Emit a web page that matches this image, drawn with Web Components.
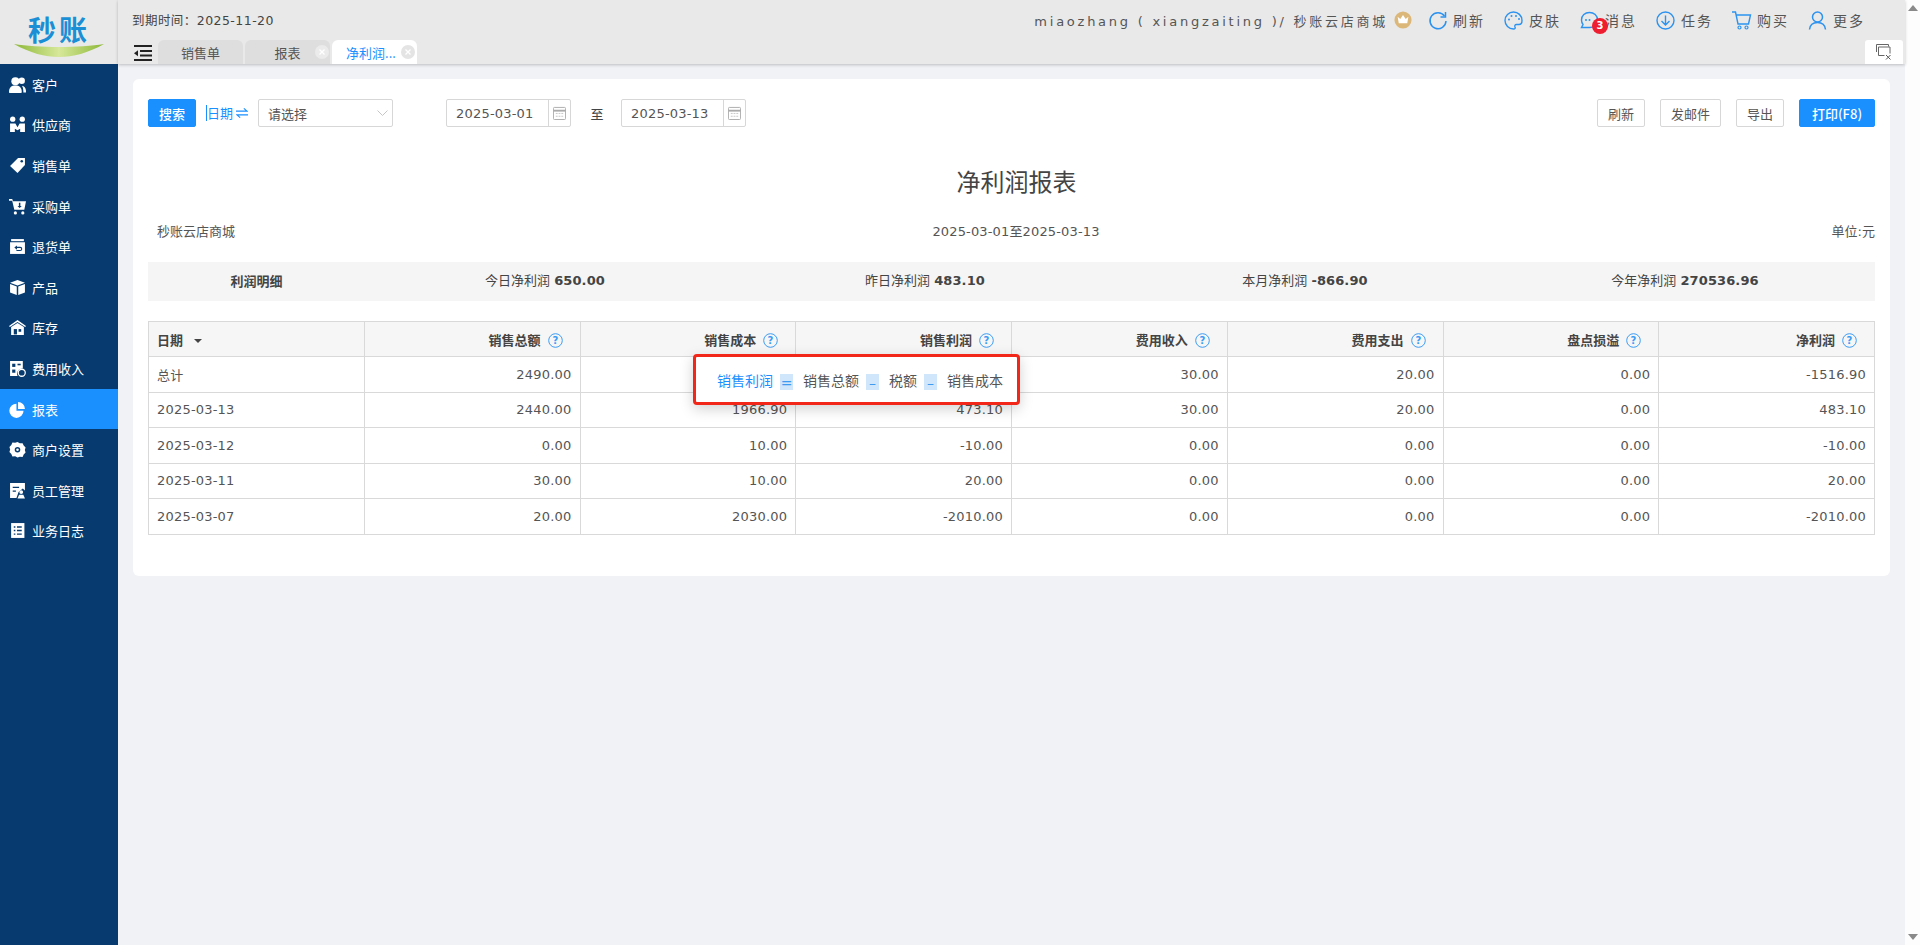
<!DOCTYPE html>
<html lang="zh-CN"><head><meta charset="utf-8"><title>净利润报表</title>
<style>
html,body{margin:0;height:100%;overflow:hidden;background:#f0f2f6;}
body{font:13px "DejaVu Sans","Noto Sans CJK SC",sans-serif;color:#555;}
</style></head><body>
<app-shell></app-shell>
<script>
const FONT='"DejaVu Sans","Noto Sans CJK SC",sans-serif';
const BLUE='#1a90ff';
function def(name,css,html,init){
  customElements.define(name,class extends HTMLElement{
    constructor(){super();const r=this.attachShadow({mode:'open'});
      r.innerHTML='<style>'+css+'</style>'+(typeof html==='function'?html(this):html);}
    connectedCallback(){if(typeof html==='function'){this.shadowRoot.innerHTML='<style>'+css+'</style>'+html(this);} if(init)init(this);}
  });
}
const NAV={
 客户:'<circle cx="6" cy="5" r="3.800"/><path d="M0 15c0-4.200 2.300-6 6-6s6 1.800 6 6c0 .6-.4 1-1 1H1c-.6 0-1-.4-1-1z"/><circle cx="12" cy="4.500" r="3"/><path d="M13.500 15.500H16c.3-3.800-1.300-6-3.800-6.400 1 1.500 1.400 3.700 1.300 6.400z"/>',
 供应商:'<circle cx="3.500" cy="3" r="2.500"/><circle cx="12.500" cy="3" r="2.500"/><path d="M1 7h5l2 3.500L10 7h5v8h-4.500v-3L8 13.500 5.500 12v3H1z"/>',
 销售单:'<path d="M8.500 1H15v6.500L8 15 1 8.500z"/><circle cx="12" cy="4" r="1.200" fill="#073b6f"/>',
 采购单:'<path d="M0 1h3l.8 2H16l-1.600 8H5L3 2.500H0z"/><circle cx="6" cy="14" r="1.500"/><circle cx="13" cy="14" r="1.500"/><path d="M9.300 4.500v3H8l2 2 2-2h-1.300v-3z" fill="#073b6f"/>',
 退货单:'<path d="M2 1h12v2H2z"/><path d="M1 4h14v11H1z"/><path d="M5 9l2.500-2v1.300h3a2 2 0 0 1 0 4H7v-1h3.500a1 1 0 0 0 0-2h-3V11z" fill="#073b6f"/>',
 产品:'<path d="M8 1l7 2.500-7 2.500-7-2.500z"/><path d="M1 4.800l6.300 2.300V15L1 12.700z"/><path d="M15 4.800L8.700 7.100V15l6.300-2.300z"/>',
 库存:'<path d="M8 1l8 5.500-.8 1L8 2.800.8 7.500 0 6.500z"/><path d="M2 7.500L8 3.800l6 3.700V15H2z"/><rect x="4.500" y="9.500" width="3" height="5" fill="#073b6f"/><rect x="9" y="9.500" width="2.500" height="2.500" fill="#073b6f"/>',
 费用收入:'<path d="M1 1h12v7a5 5 0 0 0-5 7H1z"/><rect x="3" y="3.500" width="3" height="3" fill="#073b6f"/><rect x="8" y="3.500" width="3" height="1.500" fill="#073b6f"/><rect x="3" y="9" width="3" height="3" fill="#073b6f"/><circle cx="12" cy="12" r="3.300" fill="none" stroke="#fff" stroke-width="1.200"/>',
 报表:'<path d="M7 2.500a6.700 6.700 0 1 0 6.700 6.700H7z"/><path d="M8.500 1a6.500 6.500 0 0 1 6.500 6.500H8.500z"/>',
 商户设置:'<path d="M8 1l2.200 1.100 2.600-.1 1 2.300 1.800 1.800-.7 2.400.7 2.400-1.800 1.800-1 2.300-2.600-.1L8 15.500l-2.200-1.100-2.600.1-1-2.300L.4 10.400 1.100 8 .4 5.600l1.800-1.800 1-2.300 2.600.1z"/><circle cx="8" cy="8.200" r="2.600" fill="#073b6f"/><circle cx="8" cy="8.200" r="1.200"/>',
 员工管理:'<path d="M1 1h14v7l-2-2-4 3.500L7 15H1z"/><path d="M3.500 4.500h6v1.200h-6zM3.500 8h3v1.200h-3z" fill="#073b6f"/><circle cx="11.500" cy="9.500" r="1.800"/><path d="M8 15.500l1.500-3.500h4l1.500 3.500z"/>',
 业务日志:'<path d="M2 1h12.500v14H2z"/><path d="M4.500 4h1.500v1.300H4.500zM7.500 4h4.500v1.300H7.500zM4.500 7.400h1.500v1.300H4.500zM7.500 7.400h4.500v1.300H7.500zM4.500 10.800h1.500v1.300H4.500zM7.500 10.800h4.500v1.300H7.500z" fill="#073b6f"/>'
};

def('app-logo',`:host{display:block;width:118px;height:64px;position:relative;background:#e9e9e9;font-family:"Noto Sans CJK SC",sans-serif}
.t{display:block;text-align:center;font-size:28px;font-weight:700;line-height:32px;padding-top:13px;letter-spacing:3px;color:#1a8fd6;}
svg{position:absolute;left:13px;top:43px}`,
`<span class="t">秒账</span><svg width="92" height="16" viewBox="0 0 92 16"><defs><linearGradient id="g" x1="0" x2="1" y1="0" y2="0"><stop offset="0" stop-color="#8db838"/><stop offset=".5" stop-color="#d7e89a"/><stop offset="1" stop-color="#8db838"/></linearGradient></defs><path d="M1 1C25 5 67 5 91 1 75 10 60 14 46 14 32 14 17 10 1 1z" fill="url(#g)"/></svg>`);

def('nav-item',`:host{display:flex;align-items:center;height:40.600px;padding-left:9px;color:#fff;font-size:13px;font-family:"Noto Sans CJK SC",sans-serif;box-sizing:border-box}
:host([active]){background:${BLUE}}
svg{width:17px;height:17px;fill:#fff;margin-right:6px;flex:none}`,
h=>`<svg viewBox="0 0 16 16">${(NAV[h.getAttribute('label')]||'').replace(/#073b6f/g,h.hasAttribute('active')?BLUE:'#073b6f')}</svg><slot></slot>`);

def('side-nav',`:host{display:block;width:118px;background:#073b6f;flex:none}`,
()=>Object.keys(NAV).map(k=>`<nav-item label="${k}"${k==='报表'?' active':''}>${k}</nav-item>`).join(''));

def('app-tab',`:host{display:flex;align-items:center;justify-content:center;position:relative;width:85px;height:24px;background:#dedede;border-radius:6px 6px 0 0;font-size:13px;color:#555;font-family:"Noto Sans CJK SC",sans-serif;box-sizing:border-box;margin-right:2px;}
:host([on]){background:#fff;color:${BLUE};padding-right:7px}
.x{position:absolute;right:1px;top:5px;width:14px;height:14px;border-radius:50%;background:#ebebeb;}
:host([on]) .x{background:#e4e4e4;right:2px}
.x svg{display:block}`,
h=>`<slot></slot>${h.hasAttribute('close')?'<span class="x"><svg width="14" height="14" viewBox="0 0 14 14"><path d="M4.500 4.500l5 5M9.500 4.500l-5 5" stroke="#fff" stroke-width="1.300"/></svg></span>':''}`);

const I={
 refresh:'<path d="M17.500 6A8 8 0 1 0 19 11" fill="none" stroke="#2b92f0" stroke-width="1.500"/><path d="M18.500 2v5h-5" fill="none" stroke="#2b92f0" stroke-width="1.500"/>',
 skin:'<path d="M10.500 2a8.500 8.500 0 1 0 0 17c1.700 0 2-1 1.500-2-.6-1.300 0-2.500 1.500-2.500H16c2 0 3-1.500 3-4 0-5-4-8.500-8.500-8.500z" fill="none" stroke="#2b92f0" stroke-width="1.400"/><circle cx="6" cy="9.500" r="1" fill="#2b92f0"/><circle cx="8.500" cy="6" r="1" fill="#2b92f0"/><circle cx="13" cy="6" r="1" fill="#2b92f0"/><circle cx="16" cy="9" r="1" fill="#2b92f0"/>',
 msg:'<path d="M10.500 2.500c4.500 0 8 3 8 7.500s-3.500 7.500-8 7.500H2.500l1.500-3C3 13.200 2.500 11.700 2.500 10c0-4.500 3.500-7.500 8-7.500z" fill="none" stroke="#2b92f0" stroke-width="1.400"/><circle cx="7" cy="10" r="1" fill="#2b92f0"/><circle cx="10.500" cy="10" r="1" fill="#2b92f0"/>',
 down:'<circle cx="10.500" cy="10.500" r="8.500" fill="none" stroke="#2b92f0" stroke-width="1.400"/><path d="M10.500 5.500v9M6.500 11l4 4 4-4" fill="none" stroke="#2b92f0" stroke-width="1.400"/>',
 cart:'<path d="M1 2h3.500l2.500 12h10.500l2-9H5.500" fill="none" stroke="#2b92f0" stroke-width="1.400"/><circle cx="8.500" cy="17.500" r="1.500" fill="none" stroke="#2b92f0" stroke-width="1.200"/><circle cx="15.500" cy="17.500" r="1.500" fill="none" stroke="#2b92f0" stroke-width="1.200"/>',
 user:'<circle cx="10.500" cy="7" r="5" fill="none" stroke="#2b92f0" stroke-width="1.500"/><path d="M2.500 19.500c.5-4.500 3.500-7 8-7s7.500 2.500 8 7" fill="none" stroke="#2b92f0" stroke-width="1.500"/>'
};
def('tool-btn',`:host{display:flex;align-items:center;position:relative;color:#555;letter-spacing:2px;font-size:14px;line-height:21px;font-family:"Noto Sans CJK SC",sans-serif;white-space:nowrap}
svg{width:21px;height:21px;margin-right:5px;flex:none}
.b{position:absolute;left:13px;top:8px;width:16px;height:16px;border-radius:50%;background:#ee1d2f;color:#fff;font:700 10px/16px "DejaVu Sans",sans-serif;letter-spacing:0;text-align:center}`,
h=>`<svg viewBox="0 0 21 21">${I[h.getAttribute('icon')]}</svg><slot></slot>${h.getAttribute('badge')?`<span class="b">${h.getAttribute('badge')}</span>`:''}`);

def('top-bar',`:host{display:block;flex:1;height:64px;background:#e9e9e9;position:relative;font-family:${FONT};color:#444}
.r1{display:flex;align-items:center;height:40px;padding:0 40px 0 14px;box-sizing:border-box}
.exp{font-size:12.500px;margin-top:-1px;letter-spacing:.45px}
.r{margin-left:auto;display:flex;align-items:center;}
.u{letter-spacing:2.750px;font-size:13px;color:#555;white-space:nowrap}
.crown{margin:0 15px 0 6px;display:block}
.tools{display:flex;gap:18px;align-items:center}
.r2{display:flex;align-items:flex-end;height:24px;padding:0 2px 0 14px;box-sizing:border-box}
.ham{margin:0 6px 3px 2px;display:block}
.closeall{margin-left:auto;width:38px;height:24px;background:#fff;border-radius:3px 3px 0 0;display:flex;align-items:center;justify-content:center}
`,`<div class="r1"><span class="exp">到期时间：2025-11-20</span>
<div class="r"><span class="u">miaozhang ( xiangzaiting )/ 秒账云店商城</span>
<svg class="crown" width="18" height="18" viewBox="0 0 20 20"><circle cx="10" cy="10" r="9.500" fill="#dcb77a"/><path d="M4 6.500l3 2.500 3-4.500 3 4.500 3-2.500-1.300 7H5.300z" fill="#fff"/></svg>
<div class="tools"><tool-btn icon="refresh">刷新</tool-btn><tool-btn icon="skin">皮肤</tool-btn><tool-btn icon="msg" badge="3">消息</tool-btn><tool-btn icon="down">任务</tool-btn><tool-btn icon="cart">购买</tool-btn><tool-btn icon="user">更多</tool-btn></div></div></div>
<div class="r2"><svg class="ham" width="18" height="16" viewBox="0 0 18 16"><path d="M0 1h18M6 6h12M6 10.500h12M0 15h18" stroke="#222" stroke-width="1.800"/><path d="M0 8.200l4-3v6z" fill="#222"/></svg>
<app-tab>销售单</app-tab><app-tab close>报表</app-tab><app-tab on close>净利润...</app-tab>
<span class="closeall"><svg width="16" height="16" viewBox="0 0 16 16"><path d="M.5 8V.5H12.500V2.500M2.500 11.500V3H14V9.500M2.500 11.500H8.500" fill="none" stroke="#666" stroke-width="1"/><path d="M10 11l4.500 4.500M14.500 11L10 15.500" stroke="#555" stroke-width="1"/></svg></span></div>`);

def('ui-btn',`:host{display:inline-flex;align-items:center;justify-content:center;box-sizing:border-box;height:28px;padding:0 8px;border:1px solid #d7d7d7;border-radius:2px;background:#fff;color:#555;font-size:13px;font-family:"Noto Sans CJK SC",sans-serif;white-space:nowrap}
:host([primary]){background:${BLUE};border-color:${BLUE};color:#fff}`,`<slot></slot>`);

def('date-box',`:host{display:flex;box-sizing:border-box;height:28px;width:125px;border:1px solid #d7d7d7;border-radius:2px;background:#fff;font-size:13px;color:#555;letter-spacing:.2px}
.v{flex:1;display:flex;align-items:center;padding-left:9px;border-right:1px solid #d7d7d7}
.i{width:21px;display:flex;align-items:center;justify-content:center}`,
`<span class="v"><slot></slot></span><span class="i"><svg width="13" height="14" viewBox="0 0 14 15"><rect x=".5" y="1.500" width="13" height="13" rx="1" fill="none" stroke="#aaa"/><path d="M.5 5h13" stroke="#aaa" stroke-width="2"/><path d="M3 8h2M6 8h2M9 8h2M3 11h2M6 11h2M9 11h2" stroke="#c4c4c4"/></svg></span>`);

def('select-box',`:host{display:flex;align-items:center;box-sizing:border-box;height:28px;width:135px;border:1px solid #d7d7d7;border-radius:2px;background:#fff;padding:0 4px 0 9px;font-size:13px;color:#555;font-family:"Noto Sans CJK SC",sans-serif;justify-content:space-between}`,
`<slot></slot><svg width="11" height="7" viewBox="0 0 11 7"><path d="M.5.500l5 5 5-5" fill="none" stroke="#c6c6c6"/></svg>`);

def('tool-row',`:host{display:flex;align-items:center;height:28px;font-size:13px;color:#444;font-family:${FONT}}
.lab{color:${BLUE};display:inline-flex;align-items:center;margin:0 10px;border-left:1px solid ${BLUE};font-family:"Noto Sans CJK SC",sans-serif;font-size:13px;line-height:16px;white-space:nowrap}
.lab svg{margin-left:3px}
.sep{width:50px;text-align:center;padding-left:2px;box-sizing:border-box;font-family:"Noto Sans CJK SC",sans-serif;font-size:13px}
.gap{width:53px}.right{margin-left:auto;display:flex;gap:15px}`,
`<ui-btn primary style="width:48px;padding:0;font-weight:500">搜索</ui-btn>
<span class="lab">日期<svg width="12" height="12" viewBox="0 0 13 12"><path d="M0 4h12L8.500 1M13 8H1l3.500 3" fill="none" stroke="${BLUE}" stroke-width="1.300"/></svg></span>
<select-box>请选择</select-box><span class="gap"></span><date-box>2025-03-01</date-box><span class="sep">至</span><date-box>2025-03-13</date-box>
<span class="right"><ui-btn style="width:48px">刷新</ui-btn><ui-btn style="width:61px">发邮件</ui-btn><ui-btn style="width:48px">导出</ui-btn><ui-btn primary style="width:76px;font-weight:500;font-family:${FONT}">打印(F8)</ui-btn></span>`);

def('stat-strip',`:host{display:grid;grid-template-columns:207px repeat(4,380px);height:39px;line-height:37px;background:#f5f5f5;text-align:center;font-size:13px;color:#444;font-family:${FONT};margin-top:20px}
b{font-size:13px;letter-spacing:.1px;color:#444}
.h{font-weight:700;padding-left:10px;font-family:"Noto Sans CJK SC",sans-serif}`,
`<span class="h">利润明细</span><span>今日净利润 <b>650.00</b></span><span>昨日净利润 <b>483.10</b></span><span>本月净利润 <b>-866.90</b></span><span>今年净利润 <b>270536.96</b></span>`);

const HQ=`<svg width="15" height="15" viewBox="0 0 15 15"><circle cx="7.500" cy="7.500" r="6.800" fill="none" stroke="#3b9cf5" stroke-width="1"/><text x="7.500" y="11" text-anchor="middle" font-size="10" fill="#3b9cf5" font-family="DejaVu Sans">?</text></svg>`;
const HEAD=['销售总额','销售成本','销售利润','费用收入','费用支出','盘点损溢','净利润'];
const ROWS=[
 ['总计','2490.00','','','30.00','20.00','0.00','-1516.90'],
 ['2025-03-13','2440.00','1966.90','473.10','30.00','20.00','0.00','483.10'],
 ['2025-03-12','0.00','10.00','-10.00','0.00','0.00','0.00','-10.00'],
 ['2025-03-11','30.00','10.00','20.00','0.00','0.00','0.00','20.00'],
 ['2025-03-07','20.00','2030.00','-2010.00','0.00','0.00','0.00','-2010.00']];
def('formula-tip',`:host{position:absolute;left:545px;top:33px;width:327px;height:51px;box-sizing:border-box;border:3px solid #f3261a;border-radius:4px;background:#fff;box-shadow:0 4px 14px rgba(0,0,0,.18);display:flex;align-items:center;padding-left:21px;font-size:14px;color:#555;font-family:"Noto Sans CJK SC",sans-serif;white-space:nowrap}
.a{color:${BLUE}}
i{font:400 14px/19px "DejaVu Sans",sans-serif;display:inline-block;width:13px;height:16px;background:#cfe6fb;color:#3d9bf0;text-align:center;margin:5px 10px 0 7px}`,
`<span class="a">销售利润</span><i>=</i>销售总额<i>–</i>税额<i>–</i>销售成本`);

def('report-table',`:host{display:block;position:relative;margin-top:20px;font-family:${FONT};font-size:13px;color:#555}
table{border-collapse:collapse;table-layout:fixed;width:100%}
th,td{border:1px solid #d9d9d9;padding:0 8px;text-align:right;white-space:nowrap;overflow:hidden;letter-spacing:.2px}
th{height:34px;background:#f6f6f6;color:#444;font:700 13px "Noto Sans CJK SC",sans-serif;padding-right:17px;letter-spacing:0}
td{height:34.500px}
th:first-child,td:first-child{text-align:left}
th svg{vertical-align:-3.500px;margin-left:7px}
.car{display:inline-block;width:0;height:0;border:4px solid transparent;border-top:4.500px solid #444;border-bottom:0;margin-left:11px;vertical-align:2px}`,
`<table><thead><tr><th>日期<span class="car"></span></th>${HEAD.map(h=>`<th>${h}${HQ}</th>`).join('')}</tr></thead><tbody>${ROWS.map(r=>`<tr>${r.map(c=>`<td>${c}</td>`).join('')}</tr>`).join('')}</tbody></table><formula-tip></formula-tip>`);

def('report-card',`:host{display:block;background:#fff;border-radius:6px;padding:20px 15px 41px;box-sizing:border-box;color:#555;font-family:${FONT};font-size:13px}
h1{margin:36px 0 0;padding-left:10px;font:400 24px/36px "Noto Sans CJK SC",sans-serif;color:#444;text-align:center;height:36px}
.m{display:grid;grid-template-columns:1fr auto 1fr;height:20px;margin-top:23px;line-height:20px;padding:0 0 0 9px;white-space:nowrap}
.m span:last-child{text-align:right}.m span:nth-child(2){letter-spacing:.15px}`,
`<tool-row></tool-row><h1>净利润报表</h1><div class="m"><span>秒账云店商城</span><span>2025-03-01至2025-03-13</span><span>单位:元</span></div><stat-strip></stat-strip><report-table></report-table>`);

def('scroll-rail',`:host{display:flex;flex-direction:column;justify-content:space-between;align-items:center;width:15px;flex:none;background:#fdfdfd;padding:5px 0;box-sizing:border-box}
i{display:block;width:0;height:0;border:5px solid transparent}
.u{border-bottom:6px solid #8a8a8a;border-top:0}.d{border-top:6px solid #8a8a8a;border-bottom:0}`,`<i class="u"></i><i class="d"></i>`);

def('app-shell',`:host{display:flex;width:1920px;height:945px;background:#f0f2f6;overflow:hidden}
.l{display:flex;flex-direction:column;width:118px;flex:none}
side-nav{flex:1}
.main{flex:1;display:flex;flex-direction:column;min-width:0}
top-bar{flex:none;box-shadow:0 1px 3px rgba(0,0,0,.22);position:relative;z-index:1}
.content{flex:1;padding:15px 15px 0}`,
`<div class="l"><app-logo></app-logo><side-nav></side-nav></div><div class="main"><top-bar></top-bar><div class="content"><report-card></report-card></div></div><scroll-rail></scroll-rail>`);
</script></body></html>
